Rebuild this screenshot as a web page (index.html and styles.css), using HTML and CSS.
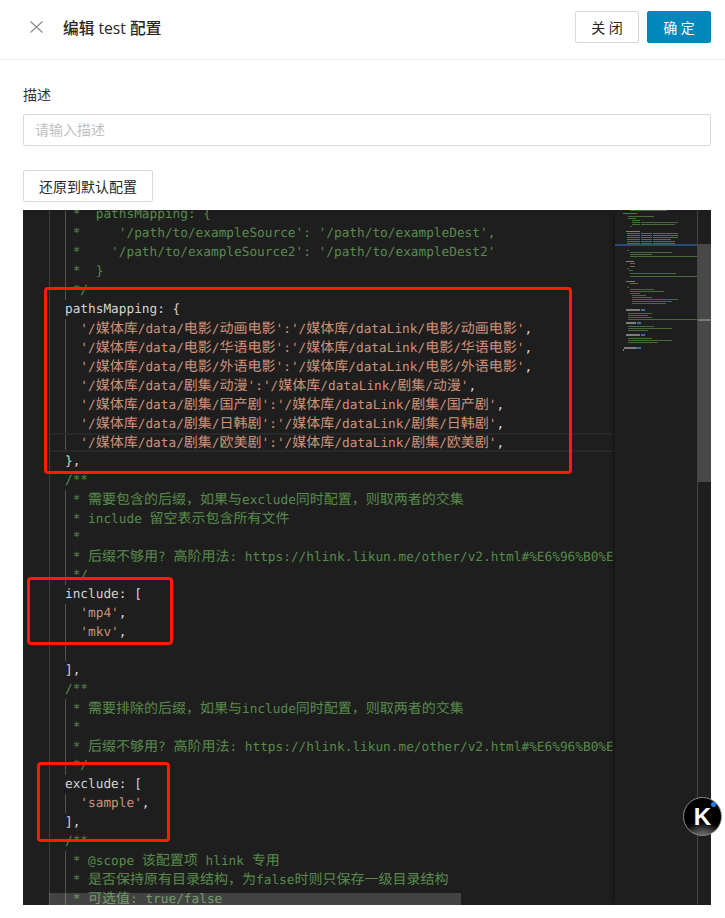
FILE: index.html
```html
<!DOCTYPE html>
<html lang="zh-CN">
<head>
<meta charset="utf-8">
<title>编辑 test 配置</title>
<link rel="stylesheet" href="styles.css">
</head>
<body>
<header class="head">
  <svg class="close-x" width="13" height="12" viewBox="0 0 13 12"><path d="M0.5 0.5 L12.5 11.5 M12.5 0.5 L0.5 11.5" stroke="#8c8c8c" stroke-width="1.2" fill="none"/></svg>
  <h1 class="title">编辑 test 配置</h1>
  <div class="actions">
    <button class="btn btn-pair">关 闭</button>
    <button class="btn btn-pair btn-primary">确 定</button>
  </div>
</header>
<main class="body">
  <label class="label">描述</label>
  <input class="input" placeholder="请输入描述">
  <button class="btn btn-reset">还原到默认配置</button>
  <div class="editor-wrap">
    <div class="editor">
      <div class="code">
        <div class="l c g">   *  pathsMapping: {</div>
        <div class="l c g">   *     '/path/to/exampleSource': '/path/to/exampleDest',</div>
        <div class="l c g">   *    '/path/to/exampleSource2': '/path/to/exampleDest2'</div>
        <div class="l c g">   *  }</div>
        <div class="l c g">   */</div>
        <div class="l">  pathsMapping: {</div>
        <div class="l s g">    '/<span class="z">媒体库</span>/data/<span class="z">电影</span>/<span class="z">动画电影</span>':'/<span class="z">媒体库</span>/dataLink/<span class="z">电影</span>/<span class="z">动画电影</span>'<span class="p">,</span></div>
        <div class="l s g">    '/<span class="z">媒体库</span>/data/<span class="z">电影</span>/<span class="z">华语电影</span>':'/<span class="z">媒体库</span>/dataLink/<span class="z">电影</span>/<span class="z">华语电影</span>'<span class="p">,</span></div>
        <div class="l s g">    '/<span class="z">媒体库</span>/data/<span class="z">电影</span>/<span class="z">外语电影</span>':'/<span class="z">媒体库</span>/dataLink/<span class="z">电影</span>/<span class="z">外语电影</span>'<span class="p">,</span></div>
        <div class="l s g">    '/<span class="z">媒体库</span>/data/<span class="z">剧集</span>/<span class="z">动漫</span>':'/<span class="z">媒体库</span>/dataLink/<span class="z">剧集</span>/<span class="z">动漫</span>'<span class="p">,</span></div>
        <div class="l s g">    '/<span class="z">媒体库</span>/data/<span class="z">剧集</span>/<span class="z">国产剧</span>':'/<span class="z">媒体库</span>/dataLink/<span class="z">剧集</span>/<span class="z">国产剧</span>'<span class="p">,</span></div>
        <div class="l s g">    '/<span class="z">媒体库</span>/data/<span class="z">剧集</span>/<span class="z">日韩剧</span>':'/<span class="z">媒体库</span>/dataLink/<span class="z">剧集</span>/<span class="z">日韩剧</span>'<span class="p">,</span></div>
        <div class="l s g cur">    '/<span class="z">媒体库</span>/data/<span class="z">剧集</span>/<span class="z">欧美剧</span>':'/<span class="z">媒体库</span>/dataLink/<span class="z">剧集</span>/<span class="z">欧美剧</span>'<span class="p">,</span></div>
        <div class="l">  },</div>
        <div class="l c">  /**</div>
        <div class="l c g">   * <span class="z">需要包含的后缀，如果与</span>exclude<span class="z">同时配置，则取两者的交集</span></div>
        <div class="l c g">   * include <span class="z">留空表示包含所有文件</span></div>
        <div class="l c g">   *</div>
        <div class="l c g">   * <span class="z">后缀不够用</span>? <span class="z">高阶用法</span>: https://hlink.likun.me/other/v2.html#%E6%96%B0%E</div>
        <div class="l c g">   */</div>
        <div class="l">  include: [</div>
        <div class="l s g">    'mp4'<span class="p">,</span></div>
        <div class="l s g">    'mkv'<span class="p">,</span></div>
        <div class="l g"> </div>
        <div class="l">  ],</div>
        <div class="l c">  /**</div>
        <div class="l c g">   * <span class="z">需要排除的后缀，如果与</span>include<span class="z">同时配置，则取两者的交集</span></div>
        <div class="l c g">   *</div>
        <div class="l c g">   * <span class="z">后缀不够用</span>? <span class="z">高阶用法</span>: https://hlink.likun.me/other/v2.html#%E6%96%B0%E</div>
        <div class="l c g">   */</div>
        <div class="l">  exclude: [</div>
        <div class="l s g">    'sample'<span class="p">,</span></div>
        <div class="l">  ],</div>
        <div class="l c">  /**</div>
        <div class="l c g">   * @scope <span class="z">该配置项</span> hlink <span class="z">专用</span></div>
        <div class="l c g">   * <span class="z">是否保持原有目录结构，为</span>false<span class="z">时则只保存一级目录结构</span></div>
        <div class="l c g">   * <span class="z">可选值</span>: true/false</div>
      </div>
      <svg class="minimap" width="82" height="695" viewBox="615 210 82 695">
        <g fill="#456a3c">
          <rect x="630" y="210" width="37" height="1"/>
          <rect x="628" y="216" width="26" height="1"/>
          <rect x="628" y="218" width="8" height="1"/>
          <rect x="632" y="220" width="8" height="1"/>
          <rect x="632" y="222" width="8" height="1"/>
          <rect x="641" y="222" width="37" height="1"/>
          <rect x="632" y="224" width="8" height="1"/>
          <rect x="641" y="224" width="34" height="1"/>
          <rect x="630" y="226" width="2" height="1"/>
          <rect x="627" y="250" width="2" height="1"/>
          <rect x="630" y="252" width="42" height="1"/>
          <rect x="630" y="254" width="22" height="1"/>
          <rect x="630" y="256" width="67" height="1"/>
          <rect x="627" y="268" width="2" height="1"/>
          <rect x="629" y="270" width="4" height="1"/>
          <rect x="630" y="273" width="46" height="1"/>
          <rect x="630" y="276" width="67" height="1"/>
          <rect x="627" y="287" width="2" height="1"/>
          <rect x="630" y="289" width="24" height="1"/>
          <rect x="630" y="291" width="34" height="1"/>
          <rect x="630" y="293" width="10" height="1"/>
          <rect x="632" y="295" width="14" height="1"/>
          <rect x="632" y="297" width="20" height="1"/>
          <rect x="632" y="299" width="46" height="1"/>
          <rect x="632" y="301" width="40" height="1"/>
          <rect x="632" y="303" width="34" height="1"/>
          <rect x="628" y="313" width="24" height="1"/>
          <rect x="628" y="315" width="20" height="1"/>
          <rect x="628" y="317" width="24" height="1"/>
          <rect x="628" y="319" width="69" height="1"/>
          <rect x="628" y="326" width="26" height="1"/>
          <rect x="628" y="328" width="44" height="1"/>
          <rect x="628" y="330" width="20" height="1"/>
          <rect x="628" y="338" width="24" height="1"/>
          <rect x="628" y="340" width="44" height="1"/>
          <rect x="628" y="342" width="30" height="1"/>
        </g>
        <g fill="#80594a">
          <rect x="627" y="233" width="51" height="1"/>
          <rect x="627" y="235" width="51" height="1"/>
          <rect x="627" y="237" width="51" height="1"/>
          <rect x="627" y="239" width="44" height="1"/>
          <rect x="627" y="241" width="48" height="1"/>
          <rect x="627" y="243" width="48" height="1"/>
          <rect x="630" y="263" width="5" height="1"/>
          <rect x="630" y="266" width="5" height="1"/>
          <rect x="630" y="283" width="8" height="1"/>
        </g>
        <g fill="#1e1e1e">
          <rect x="640" y="233" width="1" height="11"/>
          <rect x="652" y="233" width="1" height="11"/>
        </g>
        <g fill="#7c7c7c">
          <rect x="626" y="231" width="14" height="1"/>
          <rect x="626" y="261" width="8" height="1"/>
          <rect x="626" y="281" width="9" height="1"/>
          <rect x="626" y="309" width="14" height="2"/>
          <rect x="626" y="322" width="10" height="2"/>
          <rect x="626" y="334" width="14" height="2"/>
          <rect x="624" y="347" width="12" height="2"/>
          <rect x="623" y="349" width="1" height="2"/>
        </g>
        <g fill="#3b6c9c">
          <rect x="623" y="213" width="14" height="1"/>
          <rect x="641" y="309" width="4" height="2"/>
          <rect x="637" y="322" width="4" height="2"/>
          <rect x="641" y="334" width="4" height="2"/>
          <rect x="636" y="347" width="5" height="2"/>
        </g>
        <rect x="615" y="244" width="82" height="2" fill="#264f78"/>
      </svg>
      <div class="scrollbar">
        <div class="thumb"><div class="thumb-mark"></div></div>
      </div>
      <div class="sel"></div>
    </div>
    <div class="mark mark-paths"></div>
    <div class="mark mark-include"></div>
    <div class="mark mark-exclude"></div>
  </div>
</main>
<div class="badge"><span class="badge-k">K</span><span class="badge-dot"></span></div>
</body>
</html>
```
FILE: styles.css
```css
html, body { margin: 0; padding: 0; background: #fff; }
body {
  position: relative;
  width: 725px;
  height: 918px;
  overflow: hidden;
  font-family: "Open Sans", "Noto Sans CJK SC", sans-serif;
  font-size: 14px;
  color: #262626;
}
.head {
  display: flex;
  align-items: center;
  height: 54px;
  padding: 0 14px 5px 30px;
  border-bottom: 1px solid #ebebeb;
  box-sizing: content-box;
}
.close-x { display: block; }
.title {
  margin: 0 0 0 20px;
  font-size: 15.7px;
  font-weight: 500;
  color: #262626;
}
.actions { margin-left: auto; display: flex; gap: 8px; }
.btn {
  font-family: inherit;
  font-size: 14px;
  color: #262626;
  background: #fff;
  border: 1px solid #d9d9d9;
  border-radius: 2px;
  padding: 0;
  height: 32px;
  box-sizing: border-box;
}
.btn-pair { width: 64px; }
.btn-primary { background: #0088bd; border-color: #0088bd; color: #fff; }
.body { padding: 25px 14px 0 23px; }
.label { display: block; height: 20px; line-height: 20px; color: #333; }
.input {
  display: block;
  box-sizing: border-box;
  width: 688px;
  height: 32px;
  margin-top: 9px;
  padding: 0 11px 2px;
  font-family: inherit;
  font-size: 14px;
  border: 1px solid #d9d9d9;
  border-radius: 2px;
  outline: none;
}
.input::placeholder { color: #bfbfbf; }
.btn-reset { display: block; width: 130px; margin-top: 24px; }
.editor-wrap { position: relative; margin-top: 8px; width: 688px; height: 695px; }
.editor {
  position: relative;
  display: flex;
  width: 688px;
  height: 695px;
  overflow: hidden;
  background: #1e1e1e;
}
.code {
  flex: 1;
  min-width: 0;
  margin-left: 25.6px;
  border-left: 1px solid #404040;
  margin-top: -5px;
  overflow: hidden;
  font-family: "DejaVu Sans Mono", monospace;
  font-size: 12.77px;
  text-rendering: geometricPrecision;
  color: #d4d4d4;
}
.l {
  height: 19px;
  line-height: 19px;
  white-space: pre;
}
.z { font-family: "Noto Sans CJK SC", sans-serif; font-size: 14px; line-height: 19px; }
.c { color: #588a4b; }
.s { color: #ce9178; }
.p { color: #d4d4d4; }
.g {
  background-image: linear-gradient(#505050, #505050);
  background-repeat: no-repeat;
  background-position: 15px 0;
  background-size: 1px 100%;
}
.cur { box-shadow: inset 0 2px #282828, inset 0 -2px #282828; }
.minimap { flex: none; display: block; box-shadow: -4px 0 4px -3px #111; background: #1e1e1e; }
.minimap g { filter: blur(0.6px); }
.scrollbar { flex: none; width: 14px; border-left: 1px solid #444; box-sizing: border-box; background: #1e1e1e; }
.thumb { height: 238px; margin-top: 34px; background: #484848; position: relative; }
.thumb-mark { position: absolute; left: 0; right: 0; top: 75px; height: 2px; background: #7a7a7a; }
.sel {
  position: absolute;
  left: 26px;
  top: 683px;
  width: 412px;
  height: 12px;
  background: rgba(255, 255, 255, 0.17);
}
.mark {
  position: absolute;
  box-sizing: border-box;
  border: 3px solid #ff1a0a;
  border-radius: 4px;
}
.mark-paths { left: 21px; top: 77px; width: 528px; height: 187px; }
.mark-include { left: 4px; top: 367px; width: 146px; height: 68px; }
.mark-exclude { left: 14px; top: 552px; width: 133px; height: 80px; }
.badge {
  position: absolute;
  left: 683px;
  top: 797px;
  width: 39px;
  height: 39px;
  box-sizing: border-box;
  border: 1px solid #8a8a8a;
  border-radius: 50%;
  background: radial-gradient(circle at 50% 130%, #aaa 0, #555 28%, #000 48%);
  display: flex;
  align-items: center;
  justify-content: center;
}
.badge-k {
  font-family: "Liberation Sans", sans-serif;
  font-weight: 700;
  font-size: 24px;
  line-height: 1;
  color: #fff;
}
.badge-dot {
  position: absolute;
  left: 27px;
  top: 4px;
  width: 5px;
  height: 5px;
  border-radius: 50%;
  background: #1a7cff;
}
```
